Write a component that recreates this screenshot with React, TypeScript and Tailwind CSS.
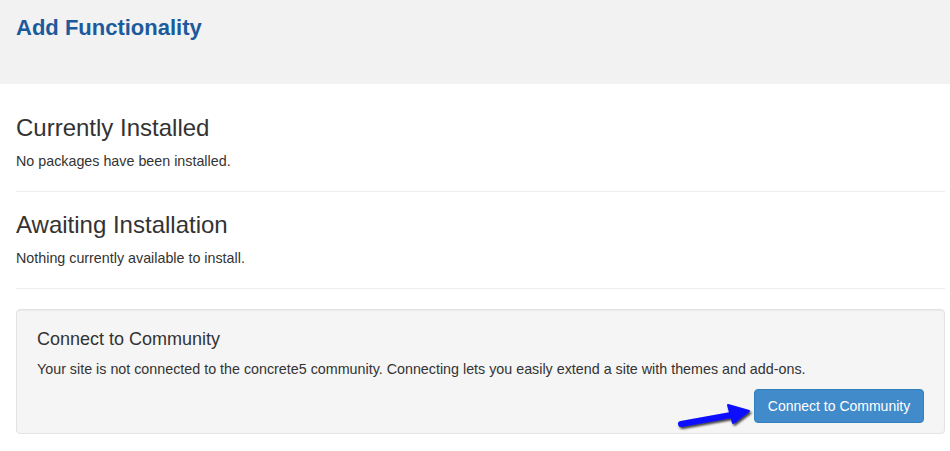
export default function App() {
  return (
    <div className="w-[950px] min-h-[451px] bg-white text-[#333] font-['Liberation_Sans',Arial,sans-serif]">
      {/* Header */}
      <div className="h-[84px] bg-[#f2f2f2] pl-4 pt-[14px]">
        <h1 className="text-[22px] font-bold leading-[28px] text-[#1d5a9c]">Add Functionality</h1>
      </div>

      <div className="pl-4 pr-[5px] pt-[31px]">
        <h3 className="text-[24px] leading-[26px] mb-[10px]">Currently Installed</h3>
        <p className="text-[14.3px] leading-[20px]">No packages have been installed.</p>
        <hr className="mt-[20px] mb-[20px] border-t border-[#eee]" />

        <h3 className="text-[24px] leading-[26px] mb-[10px]">Awaiting Installation</h3>
        <p className="text-[14.3px] leading-[20px]">Nothing currently available to install.</p>
        <hr className="mt-[20px] mb-[20px] border-t border-[#eee]" />

        {/* Well */}
        <div className="relative bg-[#f5f5f5] border border-[#e3e3e3] rounded-[4px] px-5 pt-[19px] pb-[10px] shadow-[inset_0_1px_1px_rgba(0,0,0,0.05)]">
          <h4 className="text-[18px] leading-[20px] mb-[10px]">Connect to Community</h4>
          <p className="text-[14.3px] leading-[20px]">
            Your site is not connected to the concrete5 community. Connecting lets you easily extend a site with themes and add-ons.
          </p>
          <div className="flex justify-end mt-[10px]">
            <button className="h-[34px] w-[170px] rounded-[4px] bg-[#428bca] border border-[#357ebd] text-white text-[14px]">
              Connect to Community
            </button>
          </div>

          {/* annotation arrow */}
          <svg
            className="absolute left-[654px] top-[86px]"
            width="84"
            height="40"
            viewBox="0 0 84 40"
          >
            <defs>
              <filter id="sh" x="-20%" y="-40%" width="150%" height="200%">
                <feDropShadow dx="1.5" dy="2" stdDeviation="1.2" floodColor="#000" floodOpacity="0.75" />
              </filter>
            </defs>
            <g filter="url(#sh)">
              <path d="M10 28 L60 19" stroke="#0a0aff" strokeWidth="6" strokeLinecap="round" fill="none" />
              <path d="M57 9 L78 15 L62 27 Z" fill="#0a0aff" stroke="#0a0aff" strokeWidth="2" strokeLinejoin="round" />
            </g>
          </svg>
        </div>
      </div>
    </div>
  );
}
